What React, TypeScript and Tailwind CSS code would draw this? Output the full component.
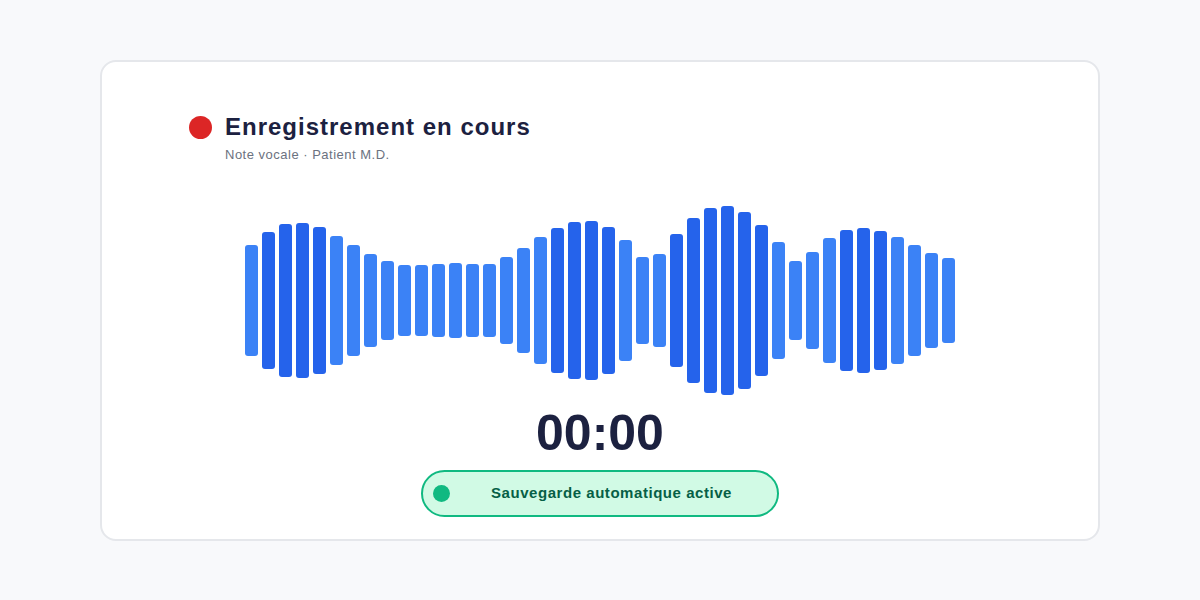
const levels = [
  111, 137, 153, 155, 147, 129, 111, 93, 79, 71, 71, 73, 75, 73, 73, 87, 105, 127, 145, 157, 159,
  147, 121, 87, 93, 133, 165, 185, 189, 177, 151, 117, 79, 97, 125, 141, 145, 139, 127, 111, 95, 85,
];

function Waveform() {
  return (
    <div className="flex h-[190px] items-center justify-center gap-[4px]">
      {levels.map((h, i) => (
        <div
          key={i}
          className={`w-[13px] shrink-0 rounded-[3px] ${h >= 131 ? "bg-[#2563eb]" : "bg-[#3b82f6]"}`}
          style={{ height: h }}
        />
      ))}
    </div>
  );
}

export default function App() {
  return (
    <div className="min-h-screen bg-[#f8f9fb] px-[100px] pt-[60px] font-['Liberation_Sans',Arial,sans-serif]">
      <div className="h-[481px] rounded-[16px] border-2 border-[#e5e7eb] bg-white px-[87px] pt-[50px]">
        <div className="flex items-center gap-[13px]">
          <span className="h-[23px] w-[23px] rounded-full bg-[#dc2626]" />
          <h1 className="text-[24px] font-bold leading-[30px] tracking-[1px] text-[#1c2140]">Enregistrement en cours</h1>
        </div>
        <p className="mt-[4px] pl-[36px] text-[13px] leading-[18px] tracking-[0.5px] text-[#6b7280]">
          Note vocale · Patient M.D.
        </p>

        <div className="mt-[41px]">
          <Waveform />
        </div>

        <div className="mt-[10px] text-center text-[50px] font-bold leading-[56px] text-[#1c2140]">00:00</div>

        <div className="mt-[9px] flex justify-center">
          <div className="flex h-[47px] w-[358px] items-center rounded-full border-2 border-[#10b981] bg-[#d1fae5] px-[10px]">
            <span className="h-[17px] w-[17px] shrink-0 rounded-full bg-[#10b981]" />
            <span className="ml-[6px] flex-1 text-center text-[15px] font-bold tracking-[0.55px] text-[#065f46]">
              Sauvegarde automatique active
            </span>
          </div>
        </div>
      </div>
    </div>
  );
}
